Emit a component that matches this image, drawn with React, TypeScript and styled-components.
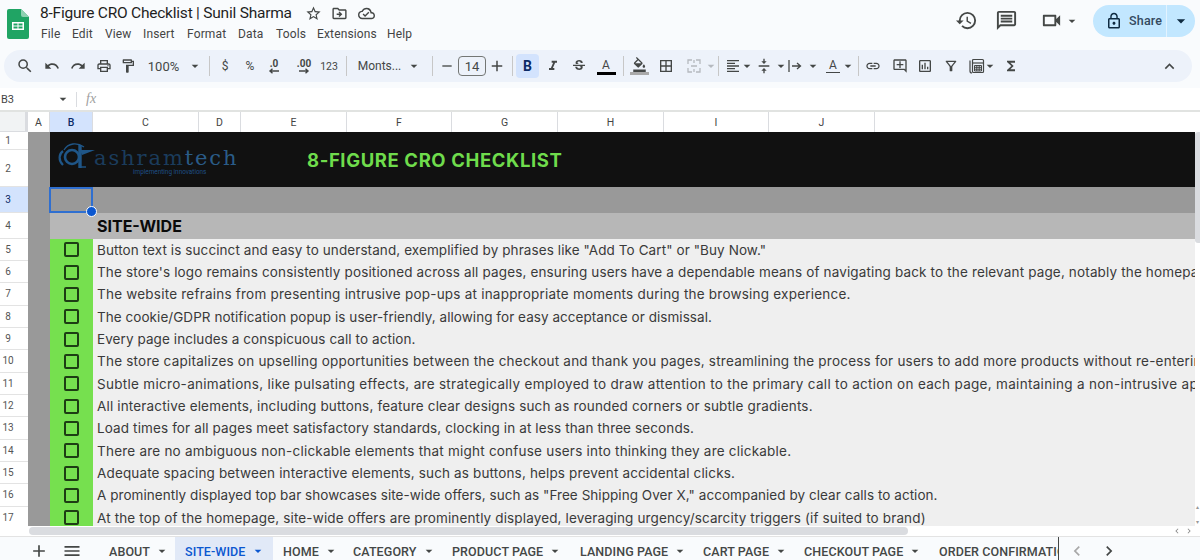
import React, { FC, ReactNode } from 'react';
import styled, { createGlobalStyle } from 'styled-components';
import {
  MdSearch,
  MdUndo,
  MdRedo,
  MdOutlineLocalPrintshop,
  MdOutlineFormatPaint,
  MdArrowDropDown,
  MdRemove,
  MdAdd,
  MdFormatItalic,
  MdStrikethroughS,
  MdOutlineFormatColorFill,
  MdBorderAll,
  MdFormatAlignLeft,
  MdVerticalAlignCenter,
  MdInsertLink,
  MdOutlineAddComment,
  MdOutlineInsertChart,
  MdOutlineFilterAlt,
  MdFunctions,
  MdExpandLess,
  MdHistory,
  MdOutlineMessage,
  MdOutlineVideocam,
  MdLockOutline,
  MdStarBorder,
  MdOutlineDriveFileMove,
  MdOutlineCloudDone,
  MdMenu,
  MdChevronLeft,
  MdChevronRight,
} from 'react-icons/md';

const GlobalStyle = createGlobalStyle`
  html, body {
    margin: 0;
    padding: 0;
    background: #fff;
  }
  * {
    box-sizing: border-box;
  }
`;

const Page = styled.div`
  width: 1200px;
  height: 560px;
  overflow: hidden;
  display: flex;
  flex-direction: column;
  font-family: Roboto, 'Liberation Sans', sans-serif;
  color: #444746;
`;

const Header = styled.header`
  height: 88px;
  background: #f9fbfd;
  flex-shrink: 0;
`;

const TitleBar = styled.div`
  height: 46px;
  display: flex;
  align-items: flex-start;
`;

const LogoSlot = styled.div`
  width: 40px;
  padding: 9px 0 0 7px;
`;

const TitleColumn = styled.div`
  flex: 1;
  padding-top: 2px;
`;

const TitleLine = styled.div`
  display: flex;
  align-items: center;
  height: 22px;
`;

const DocTitle = styled.div`
  font-size: 15.5px;
  letter-spacing: -0.22px;
  color: #1f1f1f;
  width: 260px;
  white-space: nowrap;
`;

const TitleIcon = styled.span`
  width: 26.5px;
  display: flex;
  justify-content: center;
  font-size: 17px;
  color: #444746;
`;

const MenuLine = styled.nav`
  display: flex;
  height: 19px;
  align-items: center;
  margin-left: 1px;
`;

const MenuItem = styled.span<{ $w: number }>`
  width: ${(p) => p.$w}px;
  font-size: 12px;
  letter-spacing: 0.15px;
  color: #444;
`;

const Actions = styled.div`
  display: flex;
  align-items: center;
  height: 41px;
  padding-right: 5px;
`;

const ActionIcon = styled.span<{ $w: number }>`
  width: ${(p) => p.$w}px;
  display: flex;
  justify-content: center;
  font-size: 23px;
  color: #444746;
`;

const VideoAction = styled(ActionIcon)`
  margin-left: 10px;
`;

const SharePill = styled.div`
  width: 102px;
  height: 32px;
  margin-left: 15px;
  border-radius: 16px;
  background: #c2e7ff;
  display: flex;
  align-items: center;
  color: #001d35;
`;

const ShareMain = styled.div`
  width: 74px;
  height: 100%;
  display: flex;
  align-items: center;
  gap: 6px;
  padding-left: 12px;
  border-right: 1px solid #e3f3ff;
  font-size: 12.5px;
  letter-spacing: 0.2px;
  font-weight: 500;
  color: #34495e;
  svg {
    font-size: 18px;
    color: #0e2a40;
  }
`;

const ShareCaret = styled.div`
  flex: 1;
  display: flex;
  justify-content: center;
  font-size: 20px;
  color: #0e2a40;
`;

const Toolbar = styled.div`
  margin: 4px 8px 0 4px;
  height: 32px;
  border-radius: 16px;
  background: #edf2fa;
  display: flex;
  align-items: center;
  padding: 0 13px 0 7px;
`;

const Tool = styled.span<{ $w: number; $size?: number; $faded?: boolean; $active?: boolean }>`
  width: ${(p) => p.$w}px;
  height: 24px;
  flex-shrink: 0;
  display: flex;
  align-items: center;
  justify-content: center;
  font-size: ${(p) => p.$size ?? 16}px;
  color: ${(p) => (p.$faded ? '#b5b9bf' : '#444746')};
  background: ${(p) => (p.$active ? '#d3e3fd' : 'transparent')};
  border-radius: ${(p) => (p.$active ? '4px' : '0')};
  svg {
    flex-shrink: 0;
  }
`;

const CollapseTool = styled(Tool)`
  margin-left: auto;
`;

const Divider = styled.span<{ $w: number }>`
  width: ${(p) => p.$w}px;
  height: 20px;
  flex-shrink: 0;
  display: flex;
  justify-content: center;
  &::after {
    content: '';
    width: 1px;
    flex-shrink: 0;
    background: #c7c7c7;
  }
`;

const ToolText = styled.span<{ $w: number; $size?: number }>`
  width: ${(p) => p.$w}px;
  flex-shrink: 0;
  display: flex;
  justify-content: center;
  font-size: ${(p) => p.$size ?? 13}px;
  color: #444746;
  white-space: nowrap;
`;

const DecimalTool = styled.span<{ $w: number }>`
  width: ${(p) => p.$w}px;
  flex-shrink: 0;
  display: flex;
  flex-direction: column;
  align-items: center;
  font-size: 10px;
  font-weight: 700;
  line-height: 9px;
  color: #444746;
  svg {
    display: block;
    flex-shrink: 0;
  }
`;

const SizeBox = styled.span`
  width: 28px;
  height: 20px;
  flex-shrink: 0;
  border: 1px solid #747775;
  border-radius: 4px;
  display: flex;
  align-items: center;
  justify-content: center;
  font-size: 13px;
  color: #444746;
`;

const BoldLetter = styled.span`
  font-weight: 700;
  font-size: 14px;
  color: #0b2a66;
`;

const ColorLetter = styled.span<{ $bar: string }>`
  width: 19px;
  flex-shrink: 0;
  text-align: center;
  font-size: 12px;
  line-height: 14px;
  border-bottom: 3px solid ${(p) => p.$bar};
  color: #444746;
`;

const FillIcon = styled.span`
  display: flex;
  flex-direction: column;
  align-items: center;
  font-size: 15px;
  &::after {
    content: '';
    width: 19px;
    height: 3px;
    background: #a9a9a9;
  }
`;

const RotateLetter = styled.span`
  width: 14px;
  flex-shrink: 0;
  text-align: center;
  font-size: 12px;
  line-height: 13px;
  border-bottom: 1px solid #444746;
  color: #444746;
`;

const FormulaBar = styled.div`
  height: 24px;
  flex-shrink: 0;
  display: flex;
  align-items: center;
  background: #fff;
  border-bottom: 2px solid #e1e3e1;
`;

const CellRef = styled.div`
  width: 54px;
  padding-left: 1px;
  font-size: 11px;
  color: #444;
`;

const CellRefCaret = styled.span`
  width: 18px;
  display: flex;
  justify-content: center;
  font-size: 16px;
  color: #444746;
`;

const FormulaSep = styled.span`
  width: 1px;
  height: 15px;
  margin: 0 9px 0 4px;
  background: #dadce0;
`;

const FxLabel = styled.span`
  font-family: 'Liberation Serif', serif;
  font-style: italic;
  font-size: 14px;
  color: #a0a0a0;
`;

const ColumnHeader = styled.div`
  height: 20px;
  flex-shrink: 0;
  display: flex;
  background: #fff;
`;

const Corner = styled.div`
  width: 28px;
  background: #f1f3f4;
  border-right: 3px solid #dadce0;
  border-bottom: 1px solid #dadce0;
`;

const ColumnCell = styled.div<{ $w: number; $active?: boolean }>`
  width: ${(p) => p.$w}px;
  flex-shrink: 0;
  display: flex;
  align-items: center;
  justify-content: center;
  font-size: 10.5px;
  color: ${(p) => (p.$active ? '#0b2a66' : '#444')};
  font-weight: ${(p) => (p.$active ? 500 : 400)};
  background: ${(p) => (p.$active ? '#d3e3fd' : '#fff')};
  border-right: 1px solid #dadce0;
`;

const SheetArea = styled.div`
  flex: 1;
  min-height: 0;
  display: flex;
`;

const SheetBody = styled.div`
  flex: 1;
  min-width: 0;
  overflow: hidden;
`;

const Row = styled.div<{ $h: number; $bg: string }>`
  height: ${(p) => p.$h}px;
  display: flex;
  position: relative;
  background: ${(p) => p.$bg};
`;

const SelectedRow = styled(Row)`
  z-index: 2;
`;

const RowHead = styled.div<{ $h?: number; $active?: boolean }>`
  width: 28px;
  height: ${(p) => (p.$h ? `${p.$h}px` : '100%')};
  flex-shrink: 0;
  display: flex;
  align-items: center;
  justify-content: center;
  padding-right: 12px;
  font-size: 10px;
  color: ${(p) => (p.$active ? '#0b2a66' : '#555')};
  background: ${(p) => (p.$active ? '#d3e3fd' : '#fff')};
  border-bottom: 1px solid #e3e3e3;
`;

const HeadStack = styled.div`
  display: flex;
  flex-direction: column;
`;

const SideCell = styled.div`
  width: 22px;
  flex-shrink: 0;
  background: #999;
`;

const Banner = styled.div`
  flex: 1;
  display: flex;
  align-items: center;
  background: #111;
`;

const Brand = styled.div`
  width: 257px;
  height: 100%;
  padding: 10px 0 0 7px;
  flex-shrink: 0;
`;

const BrandMark = styled.div`
  display: flex;
  align-items: flex-end;
  height: 28px;
`;

const BrandName = styled.span`
  font-family: 'DejaVu Serif', serif;
  font-size: 21px;
  line-height: 24px;
  letter-spacing: 1.9px;
  margin-left: -1px;
  color: #1b3c5c;
`;

const BrandNameLight = styled.span`
  color: #2a5c88;
`;

const BrandTag = styled.div`
  font-size: 6.4px;
  color: #1f4f86;
  margin: -2px 0 0 76px;
  white-space: nowrap;
`;

const BannerTitle = styled.div`
  font-family: Inter, sans-serif;
  font-size: 18.5px;
  font-weight: 700;
  letter-spacing: 0.6px;
  color: #6fdc4c;
  white-space: nowrap;
`;

const CheckCell = styled.div`
  width: 43px;
  flex-shrink: 0;
  display: flex;
  align-items: center;
  justify-content: center;
  background: #76e04f;
`;

const CheckBox = styled.span`
  width: 15px;
  height: 15px;
  border: 2px solid #1d3d14;
  border-radius: 2px;
`;

const PlainCell = styled.div`
  width: 43px;
  flex-shrink: 0;
`;

const SectionTitle = styled.div`
  font-family: Inter, sans-serif;
  font-size: 16px;
  font-weight: 700;
  padding: 3px 0 0 4px;
  color: #0a0a0a;
`;

const RowText = styled.div<{ $spacing: number }>`
  flex: 1;
  min-width: 0;
  padding-left: 4px;
  line-height: 22px;
  font-family: Inter, sans-serif;
  font-size: 13.5px;
  color: #3a3a3a;
  letter-spacing: ${(p) => p.$spacing}px;
  white-space: nowrap;
  overflow: hidden;
`;

const SelectionBox = styled.div`
  position: absolute;
  left: 49px;
  top: 0;
  width: 44px;
  height: 26px;
  border: 2px solid #2f6fd0;
  &::after {
    content: '';
    position: absolute;
    right: -6px;
    bottom: -6px;
    width: 9px;
    height: 9px;
    border-radius: 50%;
    background: #0b57d0;
    border: 1px solid #fff;
  }
`;

const VScroll = styled.div`
  width: 5px;
  flex-shrink: 0;
  display: flex;
  flex-direction: column;
  background: #fff;
`;

const VThumb = styled.div`
  height: 111px;
  background: #dadce0;
  border-radius: 3px 0 0 3px;
`;

const VArrows = styled.div`
  margin-top: auto;
  padding-bottom: 2px;
  display: flex;
  flex-direction: column;
  gap: 11px;
  align-items: center;
  font-size: 6px;
  line-height: 4px;
  color: #999;
`;

const HScroll = styled.div`
  height: 11px;
  flex-shrink: 0;
  display: flex;
  align-items: center;
  background: #fff;
  padding-left: 29px;
  border-bottom: 1px solid #e3e3e3;
`;

const HThumb = styled.div`
  width: 879px;
  height: 8px;
  border-radius: 4px;
  background: #dadce0;
`;

const HArrows = styled.div`
  margin-left: auto;
  display: flex;
  gap: 2px;
  padding-right: 6px;
  font-size: 10px;
  color: #888;
`;

const TabBar = styled.div`
  height: 23px;
  flex-shrink: 0;
  display: flex;
  align-items: center;
  background: #f9fbfd;
`;

const TabTool = styled.span<{ $w: number; $faded?: boolean }>`
  width: ${(p) => p.$w}px;
  flex-shrink: 0;
  margin-top: 5px;
  display: flex;
  justify-content: center;
  font-size: 20px;
  color: ${(p) => (p.$faded ? '#a8a8a8' : '#444746')};
`;

const AddTool = styled(TabTool)`
  margin-left: 25px;
`;

const MenuTool = styled(TabTool)`
  margin-right: 8px;
`;

const Tab = styled.div<{ $w: number; $active?: boolean }>`
  width: ${(p) => p.$w}px;
  height: 100%;
  flex-shrink: 0;
  display: flex;
  align-items: center;
  padding: 5px 0 0 10px;
  overflow: hidden;
  white-space: nowrap;
  font-size: 12.5px;
  font-weight: 500;
  letter-spacing: 0.1px;
  color: ${(p) => (p.$active ? '#0b57d0' : '#444746')};
  background: ${(p) => (p.$active ? '#e1e9f7' : 'transparent')};
  svg {
    font-size: 16px;
    margin-left: 4px;
    flex-shrink: 0;
  }
`;

const TabClip = styled.div`
  width: 120px;
  height: 100%;
  margin-left: 10px;
  padding-top: 5px;
  display: flex;
  align-items: center;
  overflow: hidden;
  white-space: nowrap;
  border-right: 1px solid #444746;
  font-size: 12.5px;
  font-weight: 500;
  letter-spacing: 0.1px;
  color: #444746;
  flex-shrink: 0;
`;

const SheetsLogo: FC = () => (
  <svg width="22" height="30" viewBox="0 0 22 30">
    <path d="M2 0h12l8 8v20a2 2 0 0 1-2 2H2a2 2 0 0 1-2-2V2a2 2 0 0 1 2-2z" fill="#20a464" />
    <path d="M14 0l8 8h-6a2 2 0 0 1-2-2z" fill="#8ed1b1" />
    <path d="M5 13h12v8H5z" fill="#fff" />
    <path d="M6.5 14.5h4v2h-4zM11.5 14.5h4v2h-4zM6.5 17.5h4v2h-4zM11.5 17.5h4v2h-4z" fill="#20a464" />
  </svg>
);

const Arrow: FC<{ flip?: boolean }> = ({ flip }) => (
  <svg width="14" height="6" viewBox="0 0 14 6" style={flip ? { transform: 'scaleX(-1)' } : undefined}>
    <path d="M2 3h9M8.5 .8L11 3 8.5 5.2" fill="none" stroke="#444746" strokeWidth="1.4" />
  </svg>
);

const MergeIcon: FC = () => (
  <svg width="14" height="14" viewBox="0 0 14 14" fill="none" stroke="#b5b9bf" strokeWidth="1.3">
    <path d="M1 5V1h4M9 1h4v4M1 9v4h4M9 13h4V9M4 7h6M7 1v3M7 10v3" />
  </svg>
);

const WrapIcon: FC = () => (
  <svg width="16" height="14" viewBox="0 0 16 14" fill="none" stroke="#444746" strokeWidth="1.3">
    <path d="M2 1v12M5 7h8M10 4l3.5 3L10 10" />
  </svg>
);

const FunctionIcon: FC = () => (
  <svg width="17" height="17" viewBox="0 0 17 17" fill="none" stroke="#444746" strokeWidth="1.2">
    <path d="M2 2.5v10.5a2 2 0 0 0 2 2" />
    <rect x="4.5" y="1.5" width="11" height="13" rx="1" />
    <path d="M4.5 5h11" />
    <path d="M6.5 7.5h7v5.5h-7zM6.5 9.3h7M6.5 11.2h7M8.8 7.5v5.5M11.2 7.5v5.5" strokeWidth="1" />
  </svg>
);

// the round "a" and pointed "t" of the ashramtech mark
const AtMark: FC = () => (
  <svg width="38" height="28" viewBox="0 0 38 28" fill="none" stroke="#1f5688">
    <path d="M6 9C2 12 1 18 6 23" strokeWidth="2.2" />
    <path d="M27 5C20 0 11 1 7 8" strokeWidth="1.3" />
    <circle cx="15" cy="15" r="7" strokeWidth="2.6" />
    <path d="M23 3v23" strokeWidth="3.4" />
    <path d="M23 8h15l-13 5z" fill="#1f5688" strokeWidth="0" />
    <path d="M24 25h5" strokeWidth="1.4" />
  </svg>
);

const menuItems: [string, number][] = [
  ['File', 31],
  ['Edit', 33],
  ['View', 38],
  ['Insert', 44],
  ['Format', 51],
  ['Data', 38],
  ['Tools', 41],
  ['Extensions', 70],
  ['Help', 40],
];

const columns: [string, number][] = [
  ['A', 22],
  ['B', 43],
  ['C', 106],
  ['D', 42],
  ['E', 106],
  ['F', 105],
  ['G', 106],
  ['H', 106],
  ['I', 105],
  ['J', 106],
];

// spacing per line: the stand-in font runs a little wider or narrower from line to line
const checklist: [string, number][] = [
  ['Button text is succinct and easy to understand, exemplified by phrases like "Add To Cart" or "Buy Now."', 0.09],
  [
    "The store's logo remains consistently positioned across all pages, ensuring users have a dependable means of navigating back to the relevant page, notably the homepage.",
    0.15,
  ],
  ['The website refrains from presenting intrusive pop-ups at inappropriate moments during the browsing experience.', 0.22],
  ['The cookie/GDPR notification popup is user-friendly, allowing for easy acceptance or dismissal.', 0.05],
  ['Every page includes a conspicuous call to action.', 0.08],
  [
    'The store capitalizes on upselling opportunities between the checkout and thank you pages, streamlining the process for users to add more products without re-entering their details.',
    0.22,
  ],
  [
    'Subtle micro-animations, like pulsating effects, are strategically employed to draw attention to the primary call to action on each page, maintaining a non-intrusive approach.',
    0.3,
  ],
  ['All interactive elements, including buttons, feature clear designs such as rounded corners or subtle gradients.', 0.16],
  ['Load times for all pages meet satisfactory standards, clocking in at less than three seconds.', 0.12],
  ['There are no ambiguous non-clickable elements that might confuse users into thinking they are clickable.', 0.22],
  ['Adequate spacing between interactive elements, such as buttons, helps prevent accidental clicks.', 0.15],
  ['A prominently displayed top bar showcases site-wide offers, such as "Free Shipping Over X," accompanied by clear calls to action.', 0.05],
  ['At the top of the homepage, site-wide offers are prominently displayed, leveraging urgency/scarcity triggers (if suited to brand)', 0.14],
];

const tabs: [string, number, boolean?][] = [
  ['ABOUT', 76],
  ['SITE-WIDE', 98, true],
  ['HOME', 70],
  ['CATEGORY', 99],
  ['PRODUCT PAGE', 128],
  ['LANDING PAGE', 123],
  ['CART PAGE', 101],
  ['CHECKOUT PAGE', 135],
];

const Caret: FC<{ w?: number; faded?: boolean }> = ({ w = 14, faded }) => (
  <Tool $w={w} $size={16} $faded={faded}>
    <MdArrowDropDown />
  </Tool>
);

const ToolIcon: FC<{ w: number; size?: number; children: ReactNode }> = ({ w, size, children }) => (
  <Tool $w={w} $size={size}>
    {children}
  </Tool>
);

const App: FC = () => (
  <>
    <GlobalStyle />
    <Page>
      <Header>
        <TitleBar>
          <LogoSlot>
            <SheetsLogo />
          </LogoSlot>
          <TitleColumn>
            <TitleLine>
              <DocTitle>8-Figure CRO Checklist | Sunil Sharma</DocTitle>
              <TitleIcon>
                <MdStarBorder />
              </TitleIcon>
              <TitleIcon>
                <MdOutlineDriveFileMove />
              </TitleIcon>
              <TitleIcon>
                <MdOutlineCloudDone />
              </TitleIcon>
            </TitleLine>
            <MenuLine>
              {menuItems.map(([label, w]) => (
                <MenuItem key={label} $w={w}>
                  {label}
                </MenuItem>
              ))}
            </MenuLine>
          </TitleColumn>
          <Actions>
            <ActionIcon $w={40}>
              <MdHistory />
            </ActionIcon>
            <ActionIcon $w={40}>
              <MdOutlineMessage />
            </ActionIcon>
            <VideoAction $w={30}>
              <MdOutlineVideocam />
            </VideoAction>
            <Caret w={12} />
            <SharePill>
              <ShareMain>
                <MdLockOutline />
                Share
              </ShareMain>
              <ShareCaret>
                <MdArrowDropDown />
              </ShareCaret>
            </SharePill>
          </Actions>
        </TitleBar>
        <Toolbar>
          <ToolIcon w={27} size={18}>
            <MdSearch />
          </ToolIcon>
          <ToolIcon w={27}>
            <MdUndo />
          </ToolIcon>
          <ToolIcon w={26}>
            <MdRedo />
          </ToolIcon>
          <ToolIcon w={25}>
            <MdOutlineLocalPrintshop />
          </ToolIcon>
          <ToolIcon w={24}>
            <MdOutlineFormatPaint />
          </ToolIcon>
          <ToolText $w={47}>100%</ToolText>
          <Caret w={16} />
          <Divider $w={12} />
          <ToolText $w={20} $size={12}>
            $
          </ToolText>
          <ToolText $w={30} $size={12}>
            %
          </ToolText>
          <DecimalTool $w={18}>
            .0
            <Arrow flip />
          </DecimalTool>
          <DecimalTool $w={42}>
            .00
            <Arrow />
          </DecimalTool>
          <ToolText $w={8} $size={10.5}>
            123
          </ToolText>
          <Divider $w={26} />
          <ToolText $w={41} $size={12}>
            Monts...
          </ToolText>
          <Caret w={28} />
          <Divider $w={8} />
          <ToolIcon w={22} size={16}>
            <MdRemove />
          </ToolIcon>
          <SizeBox>14</SizeBox>
          <ToolIcon w={22} size={18}>
            <MdAdd />
          </ToolIcon>
          <Divider $w={8} />
          <Tool $w={23} $active>
            <BoldLetter>B</BoldLetter>
          </Tool>
          <ToolIcon w={28}>
            <MdFormatItalic />
          </ToolIcon>
          <ToolIcon w={24}>
            <MdStrikethroughS />
          </ToolIcon>
          <Tool $w={30}>
            <ColorLetter $bar="#000">A</ColorLetter>
          </Tool>
          <Divider $w={4} />
          <Tool $w={28}>
            <FillIcon>
              <MdOutlineFormatColorFill />
            </FillIcon>
          </Tool>
          <ToolIcon w={26}>
            <MdBorderAll />
          </ToolIcon>
          <Tool $w={30} $faded>
            <MergeIcon />
          </Tool>
          <Caret w={4} faded />
          <Divider $w={10} />
          <ToolIcon w={20}>
            <MdFormatAlignLeft />
          </ToolIcon>
          <Caret w={8} />
          <ToolIcon w={26}>
            <MdVerticalAlignCenter />
          </ToolIcon>
          <Caret w={8} />
          <Tool $w={20}>
            <WrapIcon />
          </Tool>
          <Caret w={16} />
          <Tool $w={24}>
            <RotateLetter>A</RotateLetter>
          </Tool>
          <Caret w={6} />
          <Divider $w={14} />
          <ToolIcon w={16}>
            <MdInsertLink />
          </ToolIcon>
          <ToolIcon w={38}>
            <MdOutlineAddComment />
          </ToolIcon>
          <ToolIcon w={12}>
            <MdOutlineInsertChart />
          </ToolIcon>
          <ToolIcon w={40}>
            <MdOutlineFilterAlt />
          </ToolIcon>
          <Tool $w={10}>
            <FunctionIcon />
          </Tool>
          <Caret w={18} />
          <ToolIcon w={24}>
            <MdFunctions />
          </ToolIcon>
          <CollapseTool $w={20} $size={19}>
            <MdExpandLess />
          </CollapseTool>
        </Toolbar>
      </Header>
      <FormulaBar>
        <CellRef>B3</CellRef>
        <CellRefCaret>
          <MdArrowDropDown />
        </CellRefCaret>
        <FormulaSep />
        <FxLabel>fx</FxLabel>
      </FormulaBar>
      <ColumnHeader>
        <Corner />
        {columns.map(([label, w]) => (
          <ColumnCell key={label} $w={w} $active={label === 'B'}>
            {label}
          </ColumnCell>
        ))}
      </ColumnHeader>
      <SheetArea>
        <SheetBody>
          <Row $h={55} $bg="#111">
            <HeadStack>
              <RowHead $h={18}>1</RowHead>
              <RowHead $h={37}>2</RowHead>
            </HeadStack>
            <SideCell />
            <Banner>
              <Brand>
                <BrandMark>
                  <AtMark />
                  <BrandName>
                    ashram<BrandNameLight>tech</BrandNameLight>
                  </BrandName>
                </BrandMark>
                <BrandTag>implementing innovations</BrandTag>
              </Brand>
              <BannerTitle>8-FIGURE CRO CHECKLIST</BannerTitle>
            </Banner>
          </Row>
          <SelectedRow $h={26} $bg="#999">
            <RowHead $active>3</RowHead>
            <SideCell />
            <SelectionBox />
          </SelectedRow>
          <Row $h={25.6} $bg="#b7b7b7">
            <RowHead>4</RowHead>
            <SideCell />
            <PlainCell />
            <SectionTitle>SITE-WIDE</SectionTitle>
          </Row>
          {checklist.map(([text, spacing], i) => (
            <Row key={text} $h={22.33} $bg="#efefef">
              <RowHead>{i + 5}</RowHead>
              <SideCell />
              <CheckCell>
                <CheckBox />
              </CheckCell>
              <RowText $spacing={spacing}>{text}</RowText>
            </Row>
          ))}
        </SheetBody>
        <VScroll>
          <VThumb />
          <VArrows>
            <span>▴</span>
            <span>▾</span>
          </VArrows>
        </VScroll>
      </SheetArea>
      <HScroll>
        <HThumb />
        <HArrows>
          <MdChevronLeft />
          <MdChevronRight />
        </HArrows>
      </HScroll>
      <TabBar>
        <AddTool $w={28}>
          <MdAdd />
        </AddTool>
        <MenuTool $w={38}>
          <MdMenu />
        </MenuTool>
        {tabs.map(([label, w, active]) => (
          <Tab key={label} $w={w} $active={active}>
            {label}
            <MdArrowDropDown />
          </Tab>
        ))}
        <TabClip>ORDER CONFIRMATION</TabClip>
        <TabTool $w={36} $faded>
          <MdChevronLeft />
        </TabTool>
        <TabTool $w={28}>
          <MdChevronRight />
        </TabTool>
      </TabBar>
    </Page>
  </>
);

export default App;
